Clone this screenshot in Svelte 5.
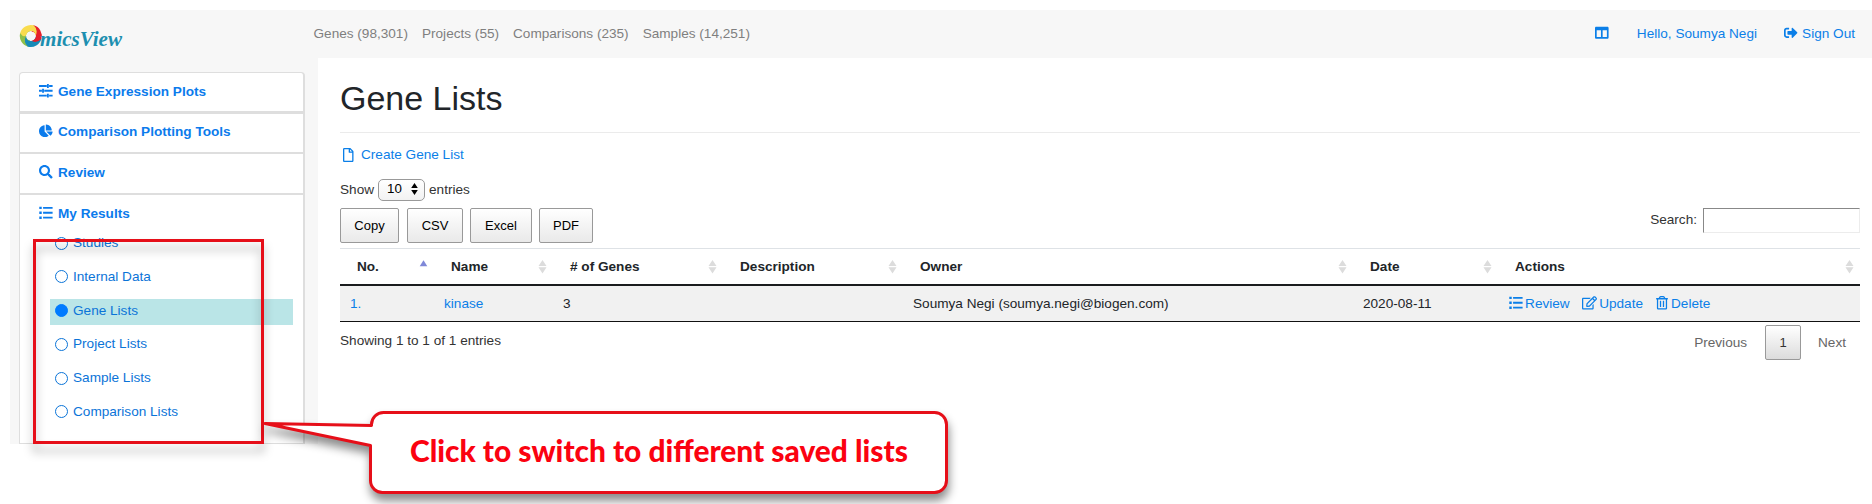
<script>
  const icons = {
    sliders: { box: '0 0 14 14', d: 'M0 1h8v2H0zM8.2 0h1.9v4H8.200zM10.4 1H14v2h-3.600zM0 6h3v2H0zM3.200 5h1.900v4H3.200zM5.400 6H14v2H5.400zM0 11h8v2H0zM8.200 10h1.900v4H8.200zM10.400 11H14v2h-3.600z' },
    pie: { box: '0 0 544 512', d: 'M527.79 288H290.5l158.03 158.03c6.04 6.04 15.98 6.53 22.19.68 38.7-36.46 65.32-85.61 73.13-140.86 1.34-9.46-6.51-17.85-16.06-17.85zm-15.83-64.8C503.72 103.74 408.26 8.28 288.8.04 279.68-.59 272 7.1 272 16.24V240h223.77c9.14 0 16.82-7.68 16.19-16.8zM224 288V50.71c0-9.55-8.39-17.4-17.84-16.06C86.99 51.49-4.1 155.6.14 280.37 4.5 408.51 114.83 513.59 243.03 511.98c50.4-.63 96.97-16.87 135.26-44.03 7.9-5.6 8.42-17.23 1.57-24.08L224 288z' },
    search: { box: '0 0 512 512', d: 'M505 442.7L405.3 343c-4.5-4.5-10.6-7-17-7H372c27.6-35.3 44-79.7 44-128C416 93.1 322.9 0 208 0S0 93.1 0 208s93.1 208 208 208c48.3 0 92.7-16.4 128-44v16.3c0 6.4 2.5 12.5 7 17l99.7 99.7c9.4 9.4 24.6 9.4 33.9 0l28.3-28.3c9.4-9.4 9.4-24.6.1-34zM208 336c-70.7 0-128-57.2-128-128 0-70.7 57.2-128 128-128 70.7 0 128 57.2 128 128 0 70.7-57.2 128-128 128z' },
    list: { box: '0 0 14 14', d: 'M.3.700h2.500V3.200H.300zM4.200 1H14v1.900H4.200zM.300 5.750h2.500v2.500H.300zM4.200 6.050H14v1.900H4.200zM.300 10.800h2.500v2.500H.300zM4.200 11.100H14v1.900H4.200z' },
    columns: { box: '0 0 512 512', d: 'M464 32H48C21.49 32 0 53.49 0 80v352c0 26.51 21.49 48 48 48h416c26.51 0 48-21.49 48-48V80c0-26.51-21.49-48-48-48zM224 416H64V160h160v256zm224 0H288V160h160v256z' },
    signout: { box: '0 0 512 512', d: 'M497 273L329 441c-15 15-41 4.500-41-17v-96H152c-13.300 0-24-10.700-24-24v-96c0-13.300 10.700-24 24-24h136V88c0-21.400 25.900-32 41-17l168 168c9.300 9.400 9.300 24.600 0 34zM192 436v-40c0-6.600-5.400-12-12-12H96c-17.700 0-32-14.300-32-32V160c0-17.700 14.300-32 32-32h84c6.600 0 12-5.400 12-12V76c0-6.600-5.400-12-12-12H96c-53 0-96 43-96 96v192c0 53 43 96 96 96h84c6.600 0 12-5.400 12-12z' },
    file: { box: '0 0 384 512', d: 'M369.9 97.9L286 14C277 5 264.8-.1 252.1-.1H48C21.5 0 0 21.5 0 48v416c0 26.5 21.5 48 48 48h288c26.5 0 48-21.5 48-48V131.9c0-12.7-5.1-25-14.1-34zM332.1 128H256V51.9l76.1 76.1zM48 464V48h160v104c0 13.3 10.7 24 24 24h104v288H48z' },
    edit: { box: '0 0 576 512', d: 'M402.3 344.9l32-32c5-5 13.7-1.5 13.7 5.7V464c0 26.5-21.5 48-48 48H48c-26.5 0-48-21.5-48-48V112c0-26.5 21.5-48 48-48h273.5c7.1 0 10.7 8.6 5.7 13.7l-32 32c-1.5 1.5-3.5 2.3-5.7 2.3H48v352h352V350.5c0-2.1.8-4.1 2.3-5.6zm156.6-201.8L296.3 405.7l-90.4 10c-26.2 2.9-48.5-19.2-45.6-45.6l10-90.4L432.9 17.1c22.9-22.9 59.9-22.9 82.7 0l43.2 43.2c22.9 22.9 22.9 60 .1 82.8zM460.1 174L402 115.9 216.2 301.8l-7.3 65.3 65.3-7.3L460.1 174zm64.8-79.7l-43.2-43.2c-4.1-4.1-10.8-4.1-14.8 0L436 82l58.1 58.1 30.9-30.9c4-4.2 4-10.8-.1-14.9z' },
    trash: { box: '0 0 448 512', d: 'M268 416h24a12 12 0 0 0 12-12V188a12 12 0 0 0-12-12h-24a12 12 0 0 0-12 12v216a12 12 0 0 0 12 12zM432 80h-82.41l-34-56.7A48 48 0 0 0 274.41 0H173.59a48 48 0 0 0-41.16 23.3L98.41 80H16A16 16 0 0 0 0 96v16a16 16 0 0 0 16 16h16v336a48 48 0 0 0 48 48h288a48 48 0 0 0 48-48V128h16a16 16 0 0 0 16-16V96a16 16 0 0 0-16-16zM171.84 50.91A6 6 0 0 1 177 48h94a6 6 0 0 1 5.15 2.91L293.61 80H154.39zM368 464H80V128h288zm-212-48h24a12 12 0 0 0 12-12V188a12 12 0 0 0-12-12h-24a12 12 0 0 0-12 12v216a12 12 0 0 0 12 12z' }
  };
  const blades = [
    { turn: -75, color: '#8fc04a' },
    { turn: 195, color: '#178bb8' },
    { turn: 105, color: '#e5202b' },
    { turn: 15, color: '#f9dc4e' }
  ];
  const counts = ['Genes (98,301)', 'Projects (55)', 'Comparisons (235)', 'Samples (14,251)'];
  const sections = [
    { icon: 'sliders', label: 'Gene Expression Plots' },
    { icon: 'pie', label: 'Comparison Plotting Tools' },
    { icon: 'search', label: 'Review' },
    { icon: 'list', label: 'My Results' }
  ];
  const results = ['Studies', 'Internal Data', 'Gene Lists', 'Project Lists', 'Sample Lists', 'Comparison Lists'];
  const current = 'Gene Lists';
  const columns = ['No.', 'Name', '# of Genes', 'Description', 'Owner', 'Date', 'Actions'];
  const exportsList = ['Copy', 'CSV', 'Excel', 'PDF'];
  const actions = [
    { icon: 'list', label: 'Review' },
    { icon: 'edit', label: 'Update' },
    { icon: 'trash', label: 'Delete' }
  ];
</script>

{#snippet icon(name)}
  <svg class="icon {name}" viewBox={icons[name].box} aria-hidden="true"><path d={icons[name].d} /></svg>
{/snippet}

<div class="page">
  <header>
    <div class="logo">
      <svg width="106" height="28" viewBox="0 0 106 28">
        <g transform="translate(12.8 13)">
          {#each blades as b}
            <path transform="rotate({b.turn})" d="M-11 0A11 11 0 0 1 0-11Q6-8 4.500-1A4.500 4.500 0 0 0-4.500 0Q-6 4-11 0Z" fill={b.color} />
          {/each}
          <circle cx="0.500" cy="0" r="4.300" fill="#f7f7f7" />
        </g>
        <text x="22" y="22.5" textLength="82" lengthAdjust="spacingAndGlyphs">micsView</text>
      </svg>
    </div>
    <nav class="counts">
      {#each counts as c}<span>{c}</span>{/each}
    </nav>
    <div class="account">
      <a class="cols">{@render icon('columns')}</a>
      <a class="hello">Hello, Soumya Negi</a>
      <a class="out">{@render icon('signout')}Sign Out</a>
    </div>
  </header>

  <div class="body">
    <aside>
      <div class="card">
        {#each sections as s}
          <div class="section"><span class="ibox">{@render icon(s.icon)}</span>{s.label}</div>
        {/each}
        <ul>
          {#each results as r}
            <li class:active={r === current}><i></i>{r}</li>
          {/each}
        </ul>
      </div>
    </aside>

    <main>
      <h1>Gene Lists</h1>
      <div class="create"><a>{@render icon('file')}Create Gene List</a></div>
      <div class="length">
        <span>Show</span>
        <span class="select">10
          <svg width="7" height="12" viewBox="0 0 7 12"><path d="M3.5 0L6.8 5H.2zM3.5 12L.2 7h6.6z" /></svg>
        </span>
        <span>entries</span>
      </div>
      <div class="tools">
        <div class="exports">
          {#each exportsList as b}<button class={b.toLowerCase()}>{b}</button>{/each}
        </div>
        <label>Search:<input type="text" /></label>
      </div>
      <table>
        <colgroup><col class="c1" /><col class="c2" /><col class="c3" /><col class="c4" /><col class="c5" /><col class="c6" /><col class="c7" /></colgroup>
        <thead>
          <tr>
            {#each columns as c, i}
              <th>
                <div class="th">
                  {c}
                  <svg width="9" height="15" viewBox="0 0 9 15">
                    {#if i === 0}
                      <path d="M4.5 1.2L8.3 7.2H.7z" fill="#7f88d8" />
                    {:else}
                      <path d="M4.5 1L8.5 7h-8zM4.5 14.4L.5 8.3h8z" fill="#dcdcdc" />
                    {/if}
                  </svg>
                </div>
              </th>
            {/each}
          </tr>
        </thead>
        <tbody>
          <tr>
            <td><a>1.</a></td>
            <td><a>kinase</a></td>
            <td>3</td>
            <td></td>
            <td>Soumya Negi (soumya.negi@biogen.com)</td>
            <td>2020-08-11</td>
            <td>
              <div class="actions">
                {#each actions as a}<a>{@render icon(a.icon)}{a.label}</a>{/each}
              </div>
            </td>
          </tr>
        </tbody>
      </table>
      <div class="foot">
        <div class="info">Showing 1 to 1 of 1 entries</div>
        <div class="pager"><span>Previous</span><button>1</button><span>Next</span></div>
      </div>
    </main>
  </div>

  <svg class="note" width="960" height="504" viewBox="0 0 960 504">
    <rect class="frame" x="34.5" y="240.5" width="228" height="202" />
    <path class="bubble" d="M371.5 425.5V424.5A12 12 0 0 1 383.500 412.500H934.500A12 12 0 0 1 946.500 424.500V480.500A12 12 0 0 1 934.500 492.500H383.500A12 12 0 0 1 370.500 480.500V445.500L265 423.500Z" />
    <text x="410" y="461.500" textLength="498" lengthAdjust="spacingAndGlyphs">Click to switch to different saved lists</text>
  </svg>
</div>

<style>
  :global(body) { background: #fff; overflow: hidden; }
  * { box-sizing: border-box; }
  .page {
    position: relative;
    height: 504px;
    padding: 10px 0 0 10px;
    font: 13.6px/20px "Liberation Sans", Arial, sans-serif;
    color: #212529;
  }
  a { color: #0b7fe8; text-decoration: none; }
  .icon { display: block; flex: none; width: 13.6px; height: 13.6px; fill: currentColor; }
  header { display: flex; height: 48px; background: #f7f7f7; }
  .logo { width: 303.500px; padding: 13px 0 0 8px; }
  .logo svg { display: block; }
  .logo text { font: italic bold 20px "Liberation Serif", serif; fill: #1d8fb0; }
  .counts { display: flex; gap: 14px; padding-top: 14px; color: #7f7f7f; white-space: nowrap; }
  .account { display: flex; align-items: flex-start; margin-left: auto; padding: 14px 17px 0 0; white-space: nowrap; }
  .account a { display: flex; align-items: center; height: 20px; }
  .hello { margin: 0 27px 0 28px; }
  .account .icon { margin-top: -2px; }
  .out { gap: 4.500px; }

  .body { display: flex; height: 386px; background: #f7f7f7; }
  aside { width: 308px; padding: 14px 13px 0 9px; }
  .card { height: 372px; background: #fff; border: 1px solid #dedede; border-right-width: 2px; border-radius: 4px 4px 0 0; }
  .section {
    display: flex; align-items: center;
    height: 41px; padding: 0 0 1px 19px;
    border-bottom: 2px solid #dedede;
    font-weight: bold; color: #0b7bec;
  }
  .section:nth-child(1) { border-bottom-width: 3px; padding-bottom: 0; }
  .section:nth-child(2) { height: 40px; padding-bottom: 3px; }
  .section:nth-child(4) { border: 0; height: 37px; padding-bottom: 0; }
  .ibox { width: 19px; margin-top: -2px; }
  ul { list-style: none; margin: -0.500px 0 0; padding: 0 10px 0 29.500px; }
  li { display: flex; align-items: center; height: 26px; padding: 0 0 3px 5px; margin-bottom: 7.800px; color: #0b74d8; }
  li i { width: 13px; height: 13px; border: 1.500px solid #0b74d8; border-radius: 50%; margin-right: 5.500px; }
  .active { background: #bae5e7; }
  .active i { background: #007bff; border-color: #007bff; }

  main { flex: 1; background: #fff; padding: 19px 12px 0 22px; height: 440px; }
  h1 { margin: 0 0 12px; font-size: 34px; font-weight: 400; line-height: 42px; padding-bottom: 13px; border-bottom: 1px solid #ebebeb; height: 56px; }
  .create { height: 34px; padding-left: 3px; }
  .create a { display: flex; align-items: center; gap: 7.500px; }
  .file { width: 10.500px; height: 14px; }
  .length { display: flex; align-items: center; gap: 4px; height: 22px; color: #333; }
  .length > span:not(.select) { margin-top: -1px; }
  .select { display: flex; align-items: center; justify-content: space-between; width: 47px; height: 22px; padding: 0 6px 2px 8px; border: 1px solid #999; border-radius: 5px; background: linear-gradient(#fff, #f2f2f2); color: #000; font-size: 13.300px; }
  .tools { display: flex; justify-content: space-between; height: 47px; padding-top: 7px; color: #333; }
  .exports { display: flex; }
  button { font: 13px "Liberation Sans", Arial, sans-serif; height: 35px; padding: 0; border: 1px solid #999; border-radius: 2px; background: linear-gradient(#fff, #e9e9e9); color: #000; }
  .copy { width: 59px; margin-right: 8px; }
  .csv { width: 56px; margin-right: 7px; }
  .excel { width: 62px; margin-right: 7px; }
  .pdf { width: 54px; }
  label { display: flex; align-items: center; gap: 6px; height: 24px; padding-bottom: 1px; }
  input { width: 157px; height: 25px; margin-top: 2px; border: 1.500px solid; border-color: #888 #ececec #ececec #888; background: #fff; }

  table { width: 1520px; table-layout: fixed; border-collapse: separate; border-spacing: 0; border-bottom: 1px solid #111; }
  .c1 { width: 94px; } .c2 { width: 119px; } .c3 { width: 170px; } .c4 { width: 180px; }
  .c5 { width: 450px; } .c6 { width: 145px; } .c7 { width: 362px; }
  th { height: 38px; padding: 0 6px 0 17px; border-top: 1px solid #dee2e6; border-bottom: 2px solid #1a1c1e; text-align: left; }
  .th { display: flex; align-items: center; justify-content: space-between; }
  td { height: 35px; padding: 0 0 0 10px; background: #f1f1f1; }
  .actions { display: flex; gap: 12px; }
  .actions a { display: flex; align-items: center; gap: 2.500px; }
  .actions .icon { margin-top: -1px; }
  .actions a:first-child { margin-left: 1px; }
  .edit { width: 15px; }
  .trash { width: 12px; }
  .actions a:last-child { margin-left: 1px; gap: 3px; }
  .foot { display: flex; justify-content: space-between; color: #333; }
  .info { padding-top: 9px; }
  .pager { display: flex; align-items: center; padding: 3px 14px 0 0; color: #666; }
  .pager button { width: 36px; margin: 0 17px 0 18px; color: #333; background: linear-gradient(#fff, #dcdcdc); }

  .note { position: absolute; left: 0; top: 0; }
  .frame { fill: none; stroke: #e60f19; stroke-width: 3; filter: drop-shadow(0 8px 5px rgba(0, 0, 0, .3)); }
  .bubble { fill: #fff; stroke: #e60f19; stroke-width: 3; stroke-linejoin: round; filter: drop-shadow(1px 7px 5px rgba(0, 0, 0, .45)); }
  .note text { font: 900 29.500px Lato, sans-serif; fill: #fb0210; }
</style>
